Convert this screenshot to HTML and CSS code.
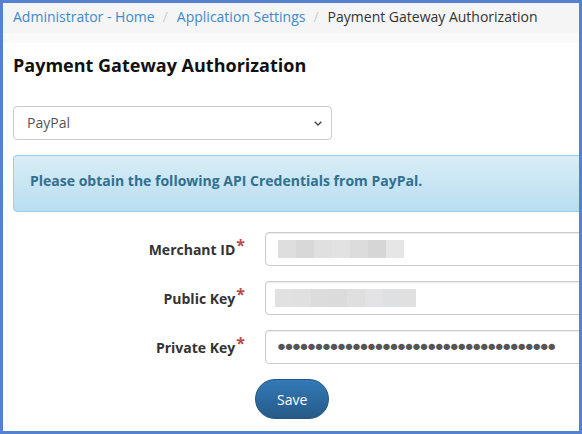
FILE: index.html
```html
<!DOCTYPE html>
<html lang="en">

<head>
    <meta charset="UTF-8">
    <meta name="viewport" content="width=device-width, initial-scale=1.0">
    <title>Payment Gateway Authorization</title>
    <link rel="stylesheet" href="styles.css">
</head>

<body>
    <div class="frame">
        <div class="topbar">
            <ol class="breadcrumb">
                <li><a href="#">Administrator - Home</a></li>
                <li><a href="#">Application Settings</a></li>
                <li class="active">Payment Gateway Authorization</li>
            </ol>
        </div>

        <main class="content">
            <h1 class="page-title">Payment Gateway Authorization</h1>

            <div class="select">
                <span>PayPal</span>
                <svg class="chevron" width="8" height="5" viewBox="0 0 8 5">
                    <path d="M0.7 0.7 L4 4 L7.3 0.7" fill="none" stroke="#444" stroke-width="1.3" />
                </svg>
            </div>

            <div class="alert">Please obtain the following API Credentials from PayPal.</div>

            <form class="form" onsubmit="return false">
                <div class="form-row">
                    <label class="form-label">Merchant ID<span class="req">*</span></label>
                    <div class="field">
                        <span class="redacted merchant">
                            <i></i><i></i><i></i><i></i><i></i><i></i><i></i>
                        </span>
                    </div>
                </div>
                <div class="form-row">
                    <label class="form-label">Public Key<span class="req">*</span></label>
                    <div class="field">
                        <span class="redacted public">
                            <i></i><i></i><i></i><i></i><i></i><i></i><i></i><i></i>
                        </span>
                    </div>
                </div>
                <div class="form-row">
                    <label class="form-label" for="privateKey">Private Key<span class="req">*</span></label>
                    <div class="field">
                        <input type="password" id="privateKey" class="secret" readonly
                            value="xxxxxxxxxxxxxxxxxxxxxxxxxxxxxxxxxxxxx">
                    </div>
                </div>
                <div class="actions">
                    <button class="btn-save" type="submit">Save</button>
                </div>
            </form>
        </main>
    </div>
</body>

</html>
```

FILE: styles.css
```css
* {
    margin: 0;
    padding: 0;
    box-sizing: border-box;
}

body {
    font-family: 'Open Sans', 'Liberation Sans', sans-serif;
    font-size: 14px;
    line-height: 20px;
    color: #333;
    background: #fff;
}

.frame {
    width: 582px;
    height: 434px;
    border: 3px solid #5482d0;
    overflow: hidden;
}

.topbar {
    background-color: #fafafa;
    padding-bottom: 10px;
}

.breadcrumb {
    list-style: none;
    background-color: #f5f5f5;
    padding: 4px 10px 6px;
    display: flex;
    white-space: nowrap;
}

.breadcrumb li + li::before {
    content: "/";
    color: #ccc;
    margin: 0 9px 0 8px;
}

.breadcrumb a {
    color: #3d89cc;
    text-decoration: none;
}

.breadcrumb .active {
    color: #333;
}

.content {
    width: 700px;
    padding: 0 10px;
}

.page-title {
    margin-top: 10px;
    font-size: 18px;
    line-height: 24px;
    font-weight: 700;
    color: #111;
}

.select {
    margin-top: 29px;
    width: 319px;
    height: 34px;
    border: 1px solid #ccc;
    border-radius: 4px;
    padding: 0 9px 0 13px;
    display: flex;
    align-items: center;
    justify-content: space-between;
    color: #555;
}

.alert {
    margin-top: 15px;
    padding: 15px 16px 20px;
    border: 1px solid #9acfea;
    border-radius: 4px;
    background-image: linear-gradient(to bottom, #d9edf7 0, #b9def0 100%);
    color: #31708f;
    font-size: 14px;
    font-weight: 700;
}

.form {
    margin-top: 20px;
    display: flex;
    flex-direction: column;
    gap: 15px;
}

.form-row {
    display: grid;
    grid-template-columns: 232px 1fr;
    gap: 20px;
}

.form-label {
    text-align: right;
    padding-top: 7px;
    font-weight: 700;
    color: #333;
}

.req {
    position: relative;
    top: -4px;
    margin-left: 1px;
    font-size: 16px;
    color: #b94a48;
}

.field {
    height: 34px;
    border: 1px solid #ccc;
    border-radius: 4px;
    box-shadow: inset 0 1px 1px rgba(0, 0, 0, 0.075);
    padding: 0 12px;
    display: flex;
    align-items: center;
}

.redacted {
    display: flex;
    height: 18px;
}

.redacted i {
    width: 18px;
    height: 100%;
}

.public {
    margin-left: -3px;
}

.merchant i:nth-child(1) { background: #dedede; }
.merchant i:nth-child(2) { background: #d8d8d8; }
.merchant i:nth-child(3) { background: #e0e0e0; }
.merchant i:nth-child(4) { background: #e2e2e2; }
.merchant i:nth-child(5) { background: #dcdcdc; }
.merchant i:nth-child(6) { background: #d6d6d6; }
.merchant i:nth-child(7) { background: #e6e6e6; }

.public i:nth-child(1) { background: #e1e1e1; }
.public i:nth-child(2) { background: #e0e0e0; }
.public i:nth-child(3) { background: #dcdcdc; }
.public i:nth-child(4) { background: #dbdbdb; }
.public i:nth-child(5) { background: #dfdfdf; }
.public i:nth-child(6) { background: #e3e3e6; }
.public i:nth-child(7) { background: #dfe0e2; }
.public i:nth-child(8) { background: #e0e0e0; width: 15px; }

.secret {
    width: 100%;
    height: 100%;
    margin-left: -3px;
    border: none;
    outline: none;
    background: none;
    font-family: 'DejaVu Sans', sans-serif;
    font-size: 22px;
    letter-spacing: -5.47px;
    color: #555;
}

.actions {
    padding-left: 242px;
}

.btn-save {
    height: 40px;
    padding: 0 21px;
    border: 1px solid #245580;
    border-radius: 20px;
    background-image: linear-gradient(to bottom, #337ab7 0, #265a88 100%);
    color: #fff;
    font-family: 'Open Sans', sans-serif;
    font-size: 14px;
    cursor: pointer;
}
```
